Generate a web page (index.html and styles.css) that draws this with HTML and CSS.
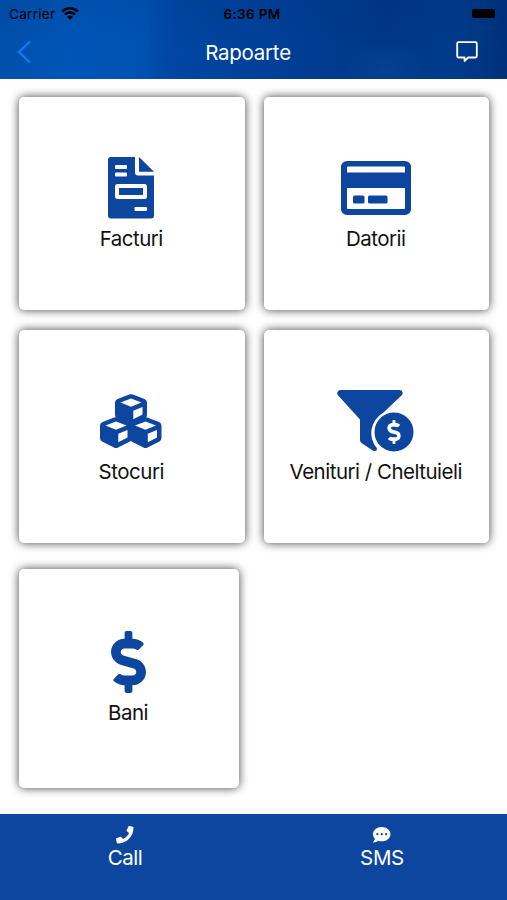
FILE: index.html
```html
<!DOCTYPE html>
<html lang="ro">

<head>
  <meta charset="UTF-8">
  <title>Rapoarte</title>
  <meta name="viewport" content="width=device-width, initial-scale=1">
  <link rel="stylesheet" href="styles.css">
</head>

<body>
  <header>
    <div class="status">
      <div class="carrier">
        <span>Carrier</span>
        <svg width="18" height="14" viewBox="0 0 18 14">
          <path d="M1.200 4.500a11.200 11.200 0 0 1 15.600 0M4 7.600a7.200 7.200 0 0 1 10 0" fill="none" stroke="#000" stroke-width="2.500"/>
          <path d="M9 12.800L6.100 10a4.100 4.100 0 0 1 5.800 0z"/>
        </svg>
      </div>
      <span class="time">6:36 PM</span>
      <span class="battery"></span>
    </div>
    <div class="navbar">
      <svg class="back" width="16" height="24" viewBox="0 0 16 24">
        <path d="M14 1.500L3 12L14 22.500" fill="none" stroke="#0a7cff" stroke-width="2.300"/>
      </svg>
      <h1>Rapoarte</h1>
      <svg class="chat" width="22" height="22" viewBox="0 0 22 22">
        <path d="M2.600 1.200h16.800q1.400 0 1.400 1.400v12.500q0 1.400-1.400 1.400h-7.200L8.500 20v-3.500H2.600q-1.400 0-1.400-1.400V2.600q0-1.400 1.400-1.400z" fill="none" stroke="#fff" stroke-width="1.800" stroke-linejoin="round"/>
      </svg>
    </div>
  </header>

  <main>
    <div class="row">
      <a class="card">
        <svg width="46" height="62" viewBox="0 0 46 62">
          <path fill-rule="evenodd" d="M3 0H27V15.500q0 3 3 3H46V58.500q0 3-3 3H3q-3 0-3-3V3Q0 0 3 0zM8 8q-1 0-1 1v2q0 1 1 1H18q1 0 1-1V9q0-1-1-1zM8 15.500q-1 0-1 1v2q0 1 1 1H18q1 0 1-1v-2q0-1-1-1zM9.500 27Q7 27 7 29.500V39.500Q7 42 9.500 42H36.500Q39 42 39 39.500V29.500Q39 27 36.500 27zM11 31H35V38H11zM27.500 50q-1 0-1 1v2q0 1 1 1H38q1 0 1-1v-2q0-1-1-1z"/>
          <path d="M31 0L46 14.800H31z"/>
        </svg>
        <span>Facturi</span>
      </a>
      <a class="card">
        <svg width="70" height="62" viewBox="0 0 70 62">
          <path fill-rule="evenodd" d="M6.500 4H63.500Q70 4 70 10.500V51.500Q70 58 63.500 58H6.500Q0 58 0 51.500V10.500Q0 4 6.500 4zM7 9.500Q6 9.500 6 10.500V15.500H64V10.500Q64 9.500 63 9.500zM6 31V51Q6 52 7 52H63Q64 52 64 51V31z"/>
          <rect x="12" y="38.500" width="11.500" height="8" rx="1.500"/>
          <rect x="27" y="38.500" width="19.500" height="8" rx="1.500"/>
        </svg>
        <span>Datorii</span>
      </a>
    </div>

    <div class="row">
      <a class="card">
        <svg width="62" height="62" viewBox="0 -4 62 62">
          <defs>
            <g id="cube">
              <path d="M14.200.5q1.800-.7 3.600 0L29.500 5q2.500 1 2.500 3.500V21q0 2.300-2 3.400l-12 6q-2 1-4 0l-12-6Q0 23.300 0 21V8.500Q0 6 2.500 5z"/>
              <path class="face" d="M16 4.500L26.500 8.500L16 12.800L5.500 8.500zM18.300 16.800L27.500 13V20.500L18.300 25.200z"/>
            </g>
          </defs>
          <use href="#cube" x="15" y="0"/>
          <use href="#cube" x="0" y="23"/>
          <use href="#cube" x="29.500" y="23"/>
        </svg>
        <span>Stocuri</span>
      </a>
      <a class="card">
        <svg width="78" height="62" viewBox="0 0 78 62">
          <path d="M3.500 0H62.500Q65 0 65.500 2T64.500 5.500L46.500 22.500A23.500 23.500 0 0 0 40 58.500Q40 61 37.500 61Q36 61 35 60L24.500 53Q23 52 23 50V29.500L1.200 5.500Q-.5 3.800 .5 2T3.500 0z"/>
          <circle cx="57" cy="42" r="19.500"/>
          <svg x="50.200" y="29.500" width="13.600" height="25" viewBox="0 0 288 512">
            <path class="face" d="M209.200 233.400l-108-31.600C88.700 198.200 80 186.500 80 173.500c0-16.300 13.200-29.500 29.500-29.500h66.300c12.200 0 24.200 3.700 34.200 10.500 6.100 4.100 14.300 3.100 19.500-2l34.800-34c7.100-6.900 6.100-18.400-1.800-24.500C238 74.800 207.400 64.100 176 64V16c0-8.800-7.200-16-16-16h-32c-8.800 0-16 7.200-16 16v48h-2.500C45.800 64-5.400 118.700.5 183.600c4.200 46.100 39.400 83.600 83.800 96.600l102.500 30c12.500 3.700 21.200 15.300 21.200 28.300 0 16.300-13.200 29.500-29.500 29.500h-66.300C100 368 88 364.300 78 357.500c-6.100-4.100-14.300-3.100-19.500 2l-34.800 34c-7.100 6.900-6.100 18.400 1.800 24.500 24.500 19.200 55.100 29.900 86.500 30v48c0 8.800 7.200 16 16 16h32c8.800 0 16-7.200 16-16v-48.200c46.600-.9 90.300-28.600 105.700-72.700 21.500-61.600-14.600-124.800-72.500-141.700z"/>
          </svg>
        </svg>
        <span>Venituri / Cheltuieli</span>
      </a>
    </div>

    <div class="row last">
      <a class="card">
        <svg width="35" height="62" viewBox="0 0 288 512">
          <path d="M209.200 233.400l-108-31.600C88.700 198.200 80 186.500 80 173.500c0-16.300 13.200-29.500 29.500-29.500h66.300c12.200 0 24.200 3.700 34.200 10.500 6.100 4.100 14.300 3.100 19.500-2l34.800-34c7.100-6.900 6.100-18.400-1.800-24.500C238 74.800 207.400 64.100 176 64V16c0-8.800-7.200-16-16-16h-32c-8.800 0-16 7.200-16 16v48h-2.500C45.800 64-5.400 118.700.5 183.600c4.200 46.100 39.400 83.600 83.800 96.600l102.500 30c12.500 3.700 21.200 15.300 21.200 28.300 0 16.300-13.200 29.500-29.500 29.500h-66.300C100 368 88 364.300 78 357.500c-6.100-4.100-14.300-3.100-19.500 2l-34.800 34c-7.100 6.900-6.100 18.400 1.800 24.500 24.500 19.200 55.100 29.900 86.500 30v48c0 8.800 7.200 16 16 16h32c8.800 0 16-7.200 16-16v-48.200c46.600-.9 90.300-28.600 105.700-72.700 21.500-61.600-14.600-124.800-72.500-141.700z"/>
        </svg>
        <span>Bani</span>
      </a>
    </div>
  </main>

  <footer>
    <a class="tab">
      <svg width="17.500" height="17.500" viewBox="0 0 512 512">
        <path d="M493.400 24.600l-104-24c-11.300-2.600-22.900 3.300-27.500 13.900l-48 112c-4.200 9.800-1.400 21.300 6.900 28l60.600 49.600c-36 76.700-98.900 140.500-177.200 177.200l-49.600-60.600c-6.800-8.300-18.200-11.100-28-6.900l-112 48C3.900 366.500-2 378.100.6 389.400l24 104C27.100 504.200 36.700 512 48 512c256.100 0 464-207.500 464-464 0-11.200-7.700-20.900-18.600-23.400z"/>
      </svg>
      <span>Call</span>
    </a>
    <a class="tab sms">
      <svg width="17.500" height="17.500" viewBox="0 0 512 512">
        <path fill-rule="evenodd" d="M256 32C114.600 32 0 125.100 0 240c0 49.600 21.400 95 57 130.700C44.500 421.100 2.700 466 2.200 466.500c-2.200 2.300-2.800 5.700-1.500 8.700S4.800 480 8 480c66.300 0 116-31.800 140.600-51.400 32.700 12.300 69 19.400 107.400 19.400 141.400 0 256-93.100 256-208S397.400 32 256 32zM128 272a32 32 0 1 1 0-64 32 32 0 0 1 0 64zM256 272a32 32 0 1 1 0-64 32 32 0 0 1 0 64zM384 272a32 32 0 1 1 0-64 32 32 0 0 1 0 64z"/>
      </svg>
      <span>SMS</span>
    </a>
  </footer>
</body>

</html>
```
FILE: styles.css
```css
* {
  box-sizing: border-box;
}

html,
body {
  height: 100%;
}

body {
  margin: 0;
  display: flex;
  flex-direction: column;
  overflow: hidden;
  background: #fff;
  color: #111;
  font-family: Inter, "Liberation Sans", sans-serif;
  font-size: 20.5px;
  letter-spacing: -.5px;
}

svg {
  display: block;
  flex: none;
}

header {
  flex: none;
  height: 79px;
  background:
    radial-gradient(ellipse 45px 35px at 385px 72px, rgba(20, 95, 180, .25), transparent),
    linear-gradient(to bottom, rgba(0, 20, 80, .08), transparent 60%),
    linear-gradient(97deg, #004fa9 0%, #0055b6 14%, #0052b2 28%, #0046a2 35%, #003f97 55%, #003786 75%, #003b8b 90%, #003078 100%);
}

.status {
  display: grid;
  grid-template-columns: 1fr auto 1fr;
  align-items: center;
  height: 27px;
  padding: 0 12px 0 9px;
  color: #000;
  font-size: 13.5px;
  letter-spacing: .3px;
}

.carrier {
  display: flex;
  align-items: center;
  gap: 6px;
}

.time {
  font-weight: 600;
}

.battery {
  justify-self: end;
  width: 23px;
  height: 9px;
  border-radius: 2px;
  background: #000;
}

.navbar {
  display: grid;
  grid-template-columns: 1fr auto 1fr;
  align-items: center;
  height: 50px;
  padding: 0 29px 0 18px;
}

.back {
  margin-left: -2px;
}

h1 {
  margin: 0;
  color: #fff;
  font-size: 20.5px;
  font-weight: 400;
  letter-spacing: -.25px;
}

.chat {
  justify-self: end;
}

main {
  flex: 1;
  padding: 18px 18px 0 19px;
}

.row {
  display: flex;
  gap: 19px;
  height: 213px;
  margin-bottom: 20px;
}

.card {
  flex: 1;
  display: flex;
  flex-direction: column;
  align-items: center;
  justify-content: center;
  padding: 0 1px 2px 0;
  border-radius: 5px;
  background: #fff;
  box-shadow: 0 0 10px rgba(0, 0, 0, .75);
  fill: #0d469f;
}

.card span {
  height: 30px;
  line-height: 40px;
  white-space: nowrap;
}

.face {
  fill: #fff;
}

.last {
  height: 219px;
  margin: 26px 0 0;
}

.last .card {
  flex: 0 0 220px;
  padding: 0 2px 4px 0;
}

footer {
  flex: none;
  display: flex;
  height: 86px;
  padding-top: 12px;
  background: #0d469f;
  color: #fff;
  fill: #fff;
}

.tab {
  flex: none;
  width: 250px;
  display: flex;
  flex-direction: column;
  align-items: center;
}

.tab span {
  line-height: 27px;
}

.sms {
  width: 264px;
  letter-spacing: -.3px;
}
```
